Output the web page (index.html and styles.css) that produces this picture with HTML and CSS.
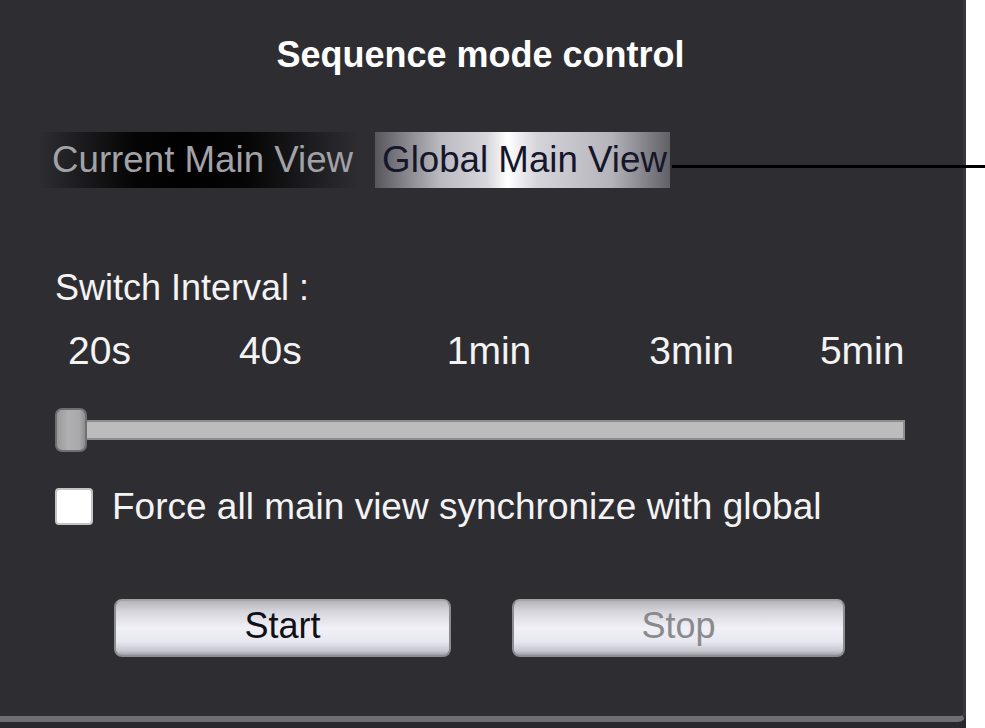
FILE: index.html
```html
<!DOCTYPE html>
<html>
<head>
<meta charset="utf-8">
<title>Sequence mode control</title>
<link rel="stylesheet" href="styles.css">
</head>
<body>
<div class="frame">
  <div class="panel">
    <div class="title">Sequence mode control</div>
    <div class="tabs">
      <div class="tab tab-current">Current Main View</div>
      <div class="tab tab-global">Global Main View</div>
      <div class="leader"></div>
    </div>
    <div class="label">Switch Interval :</div>
    <div class="ticks">
      <span class="tick t1">20s</span>
      <span class="tick t2">40s</span>
      <span class="tick t3">1min</span>
      <span class="tick t4">3min</span>
      <span class="tick t5">5min</span>
    </div>
    <div class="slider">
      <div class="track"></div>
      <div class="thumb"></div>
    </div>
    <div class="check-row">
      <span class="box"></span>
      <span class="check-text">Force all main view synchronize with global</span>
    </div>
    <div class="buttons">
      <button class="btn btn-start">Start</button>
      <button class="btn btn-stop">Stop</button>
    </div>
  </div>
</div>
</body>
</html>
```
FILE: styles.css
```css
html, body {
  margin: 0;
  padding: 0;
  background: #ffffff;
  font-family: "Liberation Sans", Arial, sans-serif;
}

.frame {
  width: 966px;
  height: 728px;
  background: #29282e;
}

.panel {
  box-sizing: border-box;
  width: 966px;
  height: 722px;
  background: #2e2d32;
  border-bottom: 6px solid #6f6f71;
  border-right: 3px solid #38373c;
  border-bottom-right-radius: 8px;
  padding-top: 37px;
  color: #f3f3f3;
}

.title {
  font-size: 36px;
  line-height: 36px;
  font-weight: bold;
  text-align: center;
  color: #ffffff;
  padding-right: 2px;
}

.tabs {
  display: flex;
  align-items: flex-start;
  margin-top: 59px;
  padding-left: 38px;
  height: 56px;
  width: 960px;
}

.tab {
  height: 56px;
  line-height: 56px;
  font-size: 36.7px;
  white-space: nowrap;
}

.tab-current {
  padding: 0 5px 0 14px;
  color: #a2a2a8;
  background: linear-gradient(to right, rgba(0,0,0,0) 0%, #050505 30%, #000 45%, #050505 65%, rgba(0,0,0,0) 100%);
}

.tab-global {
  margin-left: 17px;
  padding: 0 3px 0 7px;
  color: #16162a;
  background: linear-gradient(to right, #56565c 0%, #b9b9bf 22%, #d6d6dc 38%, #ffffff 45%, #d4d4da 55%, #b4b4ba 80%, #606066 100%);
}

.leader {
  flex: none;
  width: 313px;
  height: 3px;
  margin-top: 33px;
  margin-left: 2px;
  background: #000000;
}

.label {
  margin-top: 82px;
  padding-left: 55px;
  font-size: 36px;
  line-height: 36px;
}

.ticks {
  display: flex;
  margin-top: 26px;
  font-size: 39px;
  line-height: 38px;
  white-space: nowrap;
}

.t1 { margin-left: 68px; }
.t2 { margin-left: 108px; }
.t3 { margin-left: 145px; }
.t4 { margin-left: 118px; }
.t5 { margin-left: 86px; }

.slider {
  box-sizing: border-box;
  position: relative;
  margin-top: 38px;
  margin-left: 55px;
  width: 850px;
  height: 44px;
  padding-top: 12px;
}

.track {
  box-sizing: border-box;
  height: 20px;
  background: #bcbcbc;
  border: 2px solid #8d8d8f;
  border-left-width: 3px;
}

.thumb {
  box-sizing: border-box;
  position: absolute;
  left: 0;
  top: 0;
  width: 32px;
  height: 44px;
  border-radius: 7px;
  background: linear-gradient(to right, #9a9a9c, #b0b0b2 40%, #a8a8aa 80%, #8e8e90);
  border: 2px solid #6f6f72;
}

.check-row {
  display: flex;
  align-items: center;
  margin-top: 36px;
  padding-left: 55px;
  height: 37px;
}

.box {
  box-sizing: border-box;
  width: 38px;
  height: 37px;
  background: #ffffff;
  border: 2px solid #c4c4c6;
  border-radius: 4px;
}

.check-text {
  margin-left: 19px;
  font-size: 37px;
  line-height: 37px;
  white-space: nowrap;
}

.buttons {
  display: flex;
  margin-top: 74px;
  padding-left: 114px;
}

.btn {
  box-sizing: border-box;
  height: 58px;
  padding: 0 0 4px 0;
  border: 2px solid #8c8c92;
  border-top-color: #a4a4aa;
  border-radius: 8px;
  font-family: "Liberation Sans", Arial, sans-serif;
  font-size: 36px;
  line-height: 50px;
  background: linear-gradient(to bottom, #b6b6bc 0%, #d8d8de 22%, #f0f0f6 50%, #e8e8f0 75%, #c8c8d0 92%, #a0a0a6 100%);
}

.btn-start {
  width: 337px;
  color: #101018;
}

.btn-stop {
  width: 333px;
  margin-left: 61px;
  color: #8a8a8e;
}
```
